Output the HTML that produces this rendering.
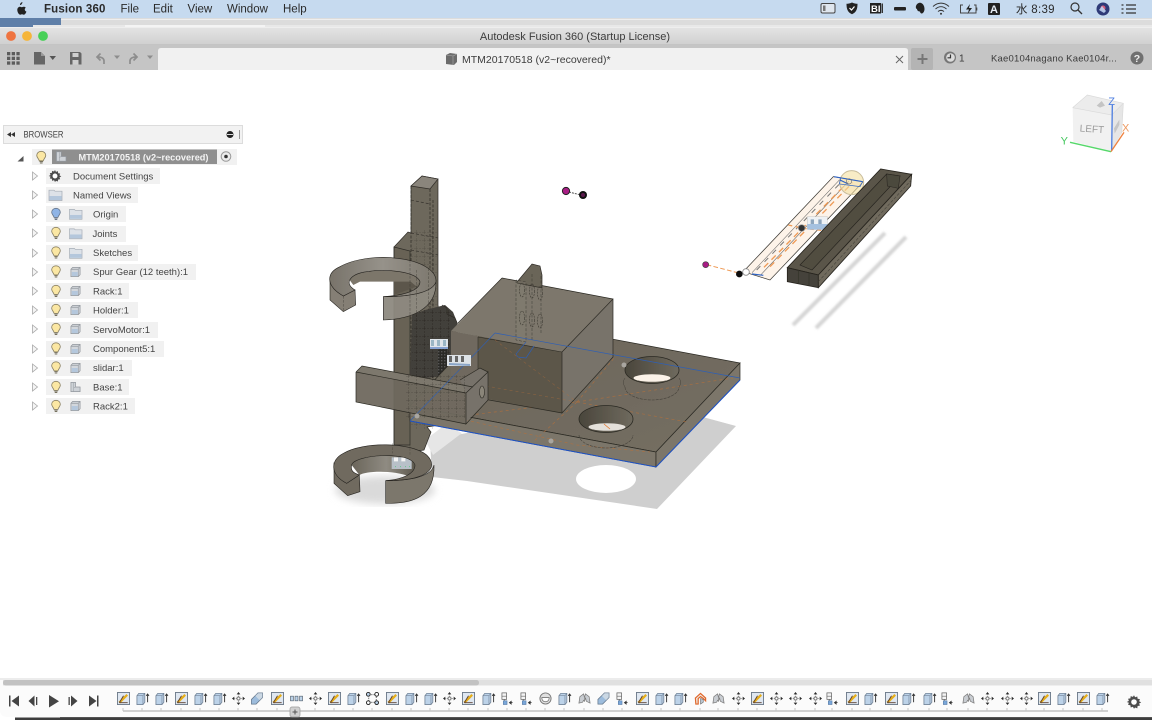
<!DOCTYPE html>
<html lang="en"><head><meta charset="utf-8"><title>Autodesk Fusion 360</title>
<style>
html,body{margin:0;padding:0;width:1152px;height:720px;overflow:hidden;background:#fff}
svg{display:block;filter:blur(.3px)}
text{font-family:"Liberation Sans","Noto Sans CJK JP",sans-serif;fill:#333}
.m{font-size:11.5px;fill:#2a2a2a}
.t{font-size:9.5px;fill:#444}
</style></head><body>
<svg width="1152" height="720" viewBox="0 0 1152 720" xmlns="http://www.w3.org/2000/svg">
<defs>
<linearGradient id="tb" x1="0" y1="0" x2="0" y2="1"><stop offset="0" stop-color="#e4e4e4"/><stop offset="1" stop-color="#cfcfcf"/></linearGradient>
<linearGradient id="holeG" x1="0" y1="0" x2="1" y2="0"><stop offset="0" stop-color="#4a463c"/><stop offset="1" stop-color="#6f6a5e"/></linearGradient>
<linearGradient id="ringG" x1="0" y1="0" x2="1" y2="0"><stop offset="0" stop-color="#78736a"/><stop offset=".5" stop-color="#96928a"/><stop offset="1" stop-color="#7c776d"/></linearGradient>
<linearGradient id="wallG" x1="0" y1="0" x2="1" y2="0"><stop offset="0" stop-color="#6a655a"/><stop offset=".55" stop-color="#8f8b82"/><stop offset="1" stop-color="#5e594e"/></linearGradient>
<linearGradient id="plateG" x1="0" y1="0" x2="1" y2="1"><stop offset="0" stop-color="#6a6458"/><stop offset="1" stop-color="#756f63"/></linearGradient>
<filter id="b1"><feGaussianBlur stdDeviation="1"/></filter>
<filter id="b3"><feGaussianBlur stdDeviation="4"/></filter>
<filter id="b05"><feGaussianBlur stdDeviation=".35"/></filter>
<pattern id="dense" width="3" height="3" patternUnits="userSpaceOnUse"><rect width="3" height="3" fill="#2b2925"/><path d="M0 0h1.4v1.4H0z" fill="#555"/></pattern>
<pattern id="grid" width="8" height="8" patternUnits="userSpaceOnUse"><path d="M0 0H8M0 0V8" stroke="#1d1b17" stroke-width=".6" stroke-dasharray="2 1"/></pattern>

<symbol id="bulb" viewBox="0 0 12 14" overflow="visible"><path d="M6 .8C3.2.8 1.3 2.8 1.3 5.1c0 2.2 2 3.2 2.6 5.6h4.2c.6-2.4 2.6-3.4 2.6-5.6C10.7 2.800 8.800.8 6 .8Z" fill="#fbe7a3" stroke="#8a8062" stroke-width=".9"/><path d="M4.200 11.500h3.600M4.600 13h2.800" stroke="#77725f" stroke-width="1.100"/></symbol>
<symbol id="bulbB" viewBox="0 0 12 14" overflow="visible"><path d="M6 .8C3.2.8 1.3 2.8 1.3 5.1c0 2.2 2 3.2 2.6 5.6h4.2c.6-2.4 2.600-3.400 2.600-5.600C10.700 2.800 8.800.8 6 .8Z" fill="#8fb4e6" stroke="#66768c" stroke-width=".9"/><path d="M4.200 11.500h3.600M4.600 13h2.800" stroke="#6c7686" stroke-width="1.100"/></symbol>
<symbol id="folder" viewBox="0 0 14 12" overflow="visible"><path d="M.5 2.200V1.200h5l1 1H13.500V11.500H.5Z" fill="#dde2e8" stroke="#a5acb5" stroke-width=".7"/><rect x="1" y="7" width="12" height="4" fill="#b4c7dc"/></symbol>
<symbol id="box" viewBox="0 0 12 12" overflow="visible"><path d="M1 3 3 1h8v8l-2 2H1Z" fill="#d3d7dc" stroke="#92979d" stroke-width=".8"/><path d="M1 3h8v8M9 3l2-2" fill="none" stroke="#92979d" stroke-width=".7"/><rect x="2" y="6" width="6.500" height="4.500" fill="#b4c7dc"/></symbol>
<symbol id="base" viewBox="0 0 12 12" overflow="visible"><path d="M1 11V1h5v5h5v5Z" fill="#ced2d7" stroke="#92979d" stroke-width=".8"/><path d="M4 11V1.500M6 6 4 7" fill="none" stroke="#9da2a8" stroke-width=".6"/></symbol>
<symbol id="tri" viewBox="0 0 8 10" overflow="visible"><path d="M1.500 1 6.500 5 1.500 9Z" fill="#f4f4f4" stroke="#a8a8a8" stroke-width=".8"/></symbol>

<symbol id="S" viewBox="0 0 14 14" overflow="visible"><rect x=".5" y=".5" width="13" height="13" fill="#dfe7f1" stroke="#6d7a8a" stroke-width="1"/><path d="M2.500 11.500 11 3" stroke="#e5ad19" stroke-width="2.400"/><path d="M2.500 11.500 7 4M2.500 11.500h9" stroke="#5d4030" stroke-width="1" fill="none"/></symbol>
<symbol id="E" viewBox="0 0 14 14" overflow="visible"><path d="M1 4 3 1.500h6.500V11L7.500 13.500H1Z" fill="#bcd2e8" stroke="#75869a" stroke-width=".9"/><path d="M1 4h6.500v9.500M7.500 4l2-2.500" fill="none" stroke="#75869a" stroke-width=".7"/><path d="M12.500 11V2.500M11 4.200l1.500-2 1.500 2" fill="none" stroke="#333" stroke-width="1"/></symbol>
<symbol id="M" viewBox="0 0 14 14" overflow="visible"><path d="M7 1.500V12.500M1.500 7H12.500" stroke="#777" stroke-width=".8" stroke-dasharray="1.500 1"/><path d="M7 0 5 2.500h4ZM7 14 5 11.500h4ZM0 7l2.500-2v4ZM14 7l-2.500-2v4Z" fill="#2c2c2c"/><rect x="5.500" y="5.500" width="3" height="3" fill="#fff" stroke="#555" stroke-width=".7"/></symbol>
<symbol id="C" viewBox="0 0 14 14" overflow="visible"><path d="M1 8 5 4h5v5L6 13H1Z" fill="#9dbcdc" stroke="#65788c" stroke-width=".8"/><path d="M5 4 8 1h5v5l-3 3" fill="#cbd8e4" stroke="#75869a" stroke-width=".8"/></symbol>
<symbol id="P" viewBox="0 0 14 14" overflow="visible"><rect x=".5" y="4.500" width="3.200" height="5" fill="#bcd2e8" stroke="#55626f" stroke-width=".7"/><rect x="5.400" y="4.500" width="3.200" height="5" fill="#bcd2e8" stroke="#55626f" stroke-width=".7"/><rect x="10.300" y="4.500" width="3.200" height="5" fill="#bcd2e8" stroke="#55626f" stroke-width=".7"/></symbol>
<symbol id="N" viewBox="0 0 14 14" overflow="visible"><path d="M3 3H11V11H3Z" fill="none" stroke="#444" stroke-width=".8" stroke-dasharray="1.500 1"/><circle cx="2.500" cy="2.500" r="2" fill="#bcd2e8" stroke="#222"/><circle cx="11.500" cy="2.500" r="2" fill="#fff" stroke="#222"/><circle cx="2.500" cy="11.500" r="2" fill="#fff" stroke="#222"/><circle cx="11.500" cy="11.500" r="2" fill="#bcd2e8" stroke="#222"/></symbol>
<symbol id="L" viewBox="0 0 14 14" overflow="visible"><path d="M1 1h5v7H1Z" fill="#f4f4f4" stroke="#666" stroke-width=".8"/><path d="M1 4.500h5M3.500 8v2" stroke="#666" stroke-width=".7"/><rect x="2.500" y="9.500" width="4" height="4" fill="#7aa7da" stroke="#5577a0" stroke-width=".6"/><path d="M9 11.500h3.500M9 11.500l2-1.500v3Z" stroke="#333" fill="#333" stroke-width=".8"/></symbol>
<symbol id="O" viewBox="0 0 14 14" overflow="visible"><circle cx="7" cy="7" r="6" fill="#e0e0e0" stroke="#777" stroke-width="1"/><path d="M3 6h8c0 3-2 4.500-4 4.500S3 9 3 6Z" fill="#fff" stroke="#666" stroke-width=".8"/></symbol>
<symbol id="H" viewBox="0 0 14 14" overflow="visible"><path d="M1 12 2 5l4-3 1 4 1-4 4 3 1 7-4-2-1-4-1 4-1-1-1 2Z" fill="#c9cdd2" stroke="#7d7d7d" stroke-width=".8"/><path d="M7 5v5" stroke="#888" stroke-width=".7"/></symbol>
<symbol id="R" viewBox="0 0 14 14" overflow="visible"><path d="M1.500 6.500 7 1.500l5.500 5v3L10 7 7 5 4.500 7v6H2Z" fill="#efe9e2" stroke="#e0662a" stroke-width="1.300"/><path d="M7 7v6l3-2V8Z" fill="#b8c4d0" stroke="#666" stroke-width=".6"/></symbol>
<symbol id="G" viewBox="0 0 20 20" overflow="visible"><path d="M10 1.500l1.400 2.600 2.700-1 .4 2.900 2.900.4-1 2.700 2.600 1.400-2.600 1.400 1 2.700-2.900.4-.4 2.900-2.700-1L10 18.500l-1.400-2.600-2.700 1-.4-2.900-2.900-.4 1-2.700L1 10l2.600-1.400-1-2.700 2.900-.4.4-2.900 2.700 1Z" fill="#4d4d4d"/><circle cx="10" cy="10" r="3.500" fill="#fff"/></symbol>
</defs>

<!-- Desktop strip and menu bar -->
<rect width="1152" height="720" fill="#fff"/>
<rect y="18" width="1152" height="10" fill="#dcdcdc"/>
<rect y="18" width="61" height="9" fill="#5f7fa8"/>
<rect x="33" y="25" width="1120" height="3" fill="#e8e8e8"/>
<rect x="61" y="19" width="1091" height="1" fill="#eee"/>
<rect x="125" y="25" width="140" height="2" fill="#f4f4f4"/>
<rect width="1152" height="18" fill="#c6daef"/>
<path d="M21.500 4.300c.8-.9 1-1.600.9-2.200-.7.100-1.500.6-1.900 1.200-.4.600-.5 1.200-.4 1.700.5.100 1 0 1.400-.7ZM24.700 9.700c0-1.200 1-1.800 1.100-1.900-.7-.9-1.600-1-2-1-.8-.1-1.600.5-2 .5s-1.100-.5-1.800-.5c-1 0-2.700.9-2.700 3.100 0 2.500 1.700 4.800 2.900 4.800.7 0 1-.4 1.800-.4s1.100.4 1.800.4c1.300 0 2.200-1.900 2.600-3.100-1-.4-1.700-1.300-1.700-2.400Z" fill="#222"/>
<text x="44" y="12.500" class="m" style="font-weight:700;letter-spacing:.15px">Fusion 360</text>
<text x="120.500" y="12.500" class="m" style="font-size:11.500px">File</text>
<text x="153" y="12.500" class="m">Edit</text>
<text x="187.500" y="12.500" class="m">View</text>
<text x="227" y="12.500" class="m">Window</text>
<text x="283" y="12.500" class="m">Help</text>

<!-- status icons -->
<g transform="translate(780 0)">
 <rect x="41" y="3.500" width="14" height="9.500" rx="1.500" fill="#dfe6ee" stroke="#444"/><rect x="43" y="5.500" width="2.500" height="5.500" fill="#777"/>
 <path d="M72 2.500c2 1 4 1.300 5.500 1.300 0 5-1 8.500-5.500 10.500-4.500-2-5.500-5.500-5.500-10.500 1.500 0 3.500-.3 5.500-1.300Z" fill="#222"/><path d="M69.500 8l2 2 3-3.500" stroke="#fff" stroke-width="1.200" fill="none"/>
 <rect x="90" y="3" width="11" height="10.500" fill="#222"/><text x="91" y="12" style="font-size:9.500px;font-weight:700;fill:#fff">BI</text><rect x="101.500" y="3.500" width="1.500" height="9.500" fill="#333"/>
 <rect x="114" y="7" width="12" height="3.500" rx="1" fill="#222"/>
 <path d="M136 6c1-3 4-4 6-2.500 1.500 1 2.500 3 2.500 5.500 0 2-1 4-2.500 4.500-1 .3-2-1-2-2-1.500 0-3-1-3-2.500-.8 0-1.500-1.500-1-3Z" fill="#222"/>
 <path d="M153 6.500c5-4.500 11-4.500 16 0M155.500 9c3.500-3 7.500-3 11 0M158 11.500c2-1.600 4-1.600 6 0" stroke="#333" stroke-width="1" fill="none"/><circle cx="161" cy="13.800" r="1" fill="#333"/>
 <path d="M183 5h-2.500v8H196V5h-2M196.800 7.500v3" fill="none" stroke="#444" stroke-width="1"/><path d="M190 4l-4 5.500h3l-1.500 4.500 4.500-6h-3Z" fill="#222"/>
 <rect x="208" y="3" width="12" height="12" rx="1" fill="#222"/><text x="210" y="13" style="font-size:11px;font-weight:700;fill:#e8eef6">A</text>
 <text x="236" y="13" style="font-size:11.500px;fill:#2a2a2a;letter-spacing:.3px">水 8:39</text>
 <circle cx="295" cy="7" r="4" fill="none" stroke="#333" stroke-width="1.200"/><path d="M298 10l4 4" stroke="#333" stroke-width="1.300"/>
 <circle cx="323" cy="9" r="6.500" fill="#2e3a78"/><circle cx="323" cy="8" r="2.500" fill="#d65a7a"/><path d="M319 10l3-4 4 5-2 2Z" fill="#bcd0ef" opacity=".9"/>
 <path d="M341.500 5h2M346 5h10M341.500 9h2M346 9h10M341.500 13h2M346 13h10" stroke="#333" stroke-width="1.300"/>
</g>

<!-- Title bar -->
<rect y="27" width="1152" height="18" fill="url(#tb)"/>
<rect y="27" width="1152" height="1" fill="#eee"/>
<rect y="44.500" width="1152" height="1" fill="#b9b9b9"/>
<circle cx="11" cy="36" r="4.900" fill="#ef7440"/><circle cx="27" cy="36" r="4.900" fill="#f5b53a"/><circle cx="43" cy="36" r="4.900" fill="#47d057"/>
<text x="575" y="40" text-anchor="middle" style="font-size:11px;fill:#3d3d3d">Autodesk Fusion 360 (Startup License)</text>

<!-- Toolbar -->
<rect y="45" width="1152" height="25" fill="#c5c5c5"/>
<path d="M158 70V51q0-3 3-3H905q3 0 3 3V70Z" fill="#f1f1f1"/>
<g fill="#5c5c5c"><rect x="7" y="52" width="3.300" height="3.300"/><rect x="11.700" y="52" width="3.300" height="3.300"/><rect x="16.400" y="52" width="3.300" height="3.300"/><rect x="7" y="56.700" width="3.300" height="3.300"/><rect x="11.700" y="56.700" width="3.300" height="3.300"/><rect x="16.400" y="56.700" width="3.300" height="3.300"/><rect x="7" y="61.400" width="3.300" height="3.300"/><rect x="11.700" y="61.400" width="3.300" height="3.300"/><rect x="16.400" y="61.400" width="3.300" height="3.300"/></g>
<path d="M34 52h7l4 4v8.500H34Z" fill="#666"/><path d="M41 52v4h4Z" fill="#999"/><path d="M49.500 56h6.500l-3.250 4Z" fill="#555"/>
<path d="M70 52h10l1.500 1.500v11h-11.500Z" fill="#666"/><rect x="72.500" y="53" width="6" height="4" fill="#cfcfcf"/><rect x="72.500" y="60" width="6" height="4.500" fill="#cfcfcf"/>
<path d="M104 64v-3c0-3-3-4-6-4M100.500 53.500 97 57l3.500 3.500" fill="none" stroke="#8d8d8d" stroke-width="1.700"/>
<path d="M114 55.500h6l-3 3.500Z" fill="#8d8d8d"/>
<path d="M130 64v-3c0-3 3-4 6-4M133.500 53.500 137 57l-3.500 3.500" fill="none" stroke="#8d8d8d" stroke-width="1.700"/>
<path d="M147 55.500h6l-3 3.500Z" fill="#8d8d8d"/>
<path d="M446 55 450 53l7 1v8l-3 3-8-1Z" fill="#6b6b6b"/><path d="M446 55l7 1v9M453 56l4-2" fill="none" stroke="#aaa" stroke-width=".6"/>
<text x="462" y="63" style="font-size:10.500px;fill:#3d3d3d">MTM20170518 (v2~recovered)*</text>
<path d="M896 56l7 7M903 56l-7 7" stroke="#666" stroke-width="1"/>
<rect x="911" y="48" width="22" height="22" rx="2" fill="#b4b4b4"/><path d="M922.500 54v10M917.500 59h10" stroke="#777" stroke-width="2"/>
<circle cx="950" cy="57.500" r="6" fill="#777"/><circle cx="950.500" cy="57.500" r="4.300" fill="#dcdcdc"/><path d="M950.500 54.500v3.300h-3" stroke="#333" stroke-width="1.200" fill="none"/>
<text x="959" y="61.500" style="font-size:10px;fill:#3a3a3a">1</text>
<text x="991" y="61.500" style="font-size:9.500px;fill:#3a3a3a;letter-spacing:.2px">Kae0104nagano Kae0104r...</text>
<circle cx="1137" cy="58" r="6.500" fill="#707070"/><text x="1137" y="62" text-anchor="middle" style="font-size:10.500px;font-weight:700;fill:#eee">?</text>

<!-- Shadows -->
<g>
 <path d="M430 440 432 477 467 481 657 509 736 426 640 400Z" fill="#cfcfcf"/>
 <ellipse cx="606" cy="479" rx="30" ry="14" fill="#fff" filter="url(#b05)"/>
 <path d="M425 440 433 455 462 433 445 425Z" fill="#e6e6e6"/>
 <ellipse cx="385" cy="490" rx="50" ry="14" fill="#dadada" filter="url(#b3)"/>
 <path d="M793 325 885 233" stroke="#d4d4d4" stroke-width="4" filter="url(#b1)"/>
 <path d="M816 328 906 237" stroke="#d4d4d4" stroke-width="4" filter="url(#b1)"/>
</g>

<!-- Tower -->
<g stroke="#2e2c27" stroke-width=".7" filter="url(#b05)">
 <path d="M394 247 408 232 411 233V186L422 176 438 179V305L440 320 440 425 427 427 431 432 424 450 410 452 394 445Z" fill="#6d675c"/>
 <path d="M411 186 430 189 438 179 422 176Z" fill="#8a857b"/>
 <path d="M394 247 410 251V445H394Z" fill="#55503f" fill-opacity=".22"/>
 <path d="M411 186V420M430 189V420M433 200V420" fill="none" stroke-dasharray="3 1.500" stroke-width=".7"/>
 <path d="M411 233 438 238M411 250 438 255M411 200 430 204" fill="none" stroke-dasharray="3 2" stroke-width=".6"/>
 <rect x="410" y="230" width="28" height="200" fill="url(#grid)" stroke="none" opacity=".45"/>
 <path d="M425 310 445 305 453 312 457 322 458 340 450 375 410 380 412 315Z" fill="#43403a" stroke="none"/>
 <path d="M442 305 447 308 447 314 455 318 458 325" fill="none"/>
 <rect x="412" y="310" width="38" height="72" fill="url(#grid)" stroke="none"/>
 <rect x="438" y="348" width="9" height="30" fill="url(#dense)" stroke="none"/>
</g>

<!-- Plate -->
<g filter="url(#b05)">
 <path d="M410 406 656 452 740 363 494 317Z" fill="url(#plateG)" stroke="#2b2923" stroke-width=".7"/>
 <path d="M410 406 656 452V467L410 421Z" fill="#7b766a" stroke="#2b2923" stroke-width=".7"/>
 <path d="M656 452 740 363V380L656 467Z" fill="#7b766a" stroke="#2b2923" stroke-width=".7"/>
 <!-- Plate sketch lines -->
 <g fill="none" stroke="#b8703a" stroke-width=".7" stroke-dasharray="3 3" opacity=".75">
  <path d="M577 402 687 422M577 402 733 378M577 402 533 442M577 402 615 357M470 415 577 402M430 412 577 445 650 452"/>
 </g>
 <!-- Holes -->
 <ellipse cx="652" cy="370" rx="27" ry="13.500" fill="url(#holeG)" stroke="#2b2923" stroke-width=".8"/>
 <ellipse cx="652" cy="378" rx="18.500" ry="3.800" fill="#fbf2e8"/>
 <path d="M625 387a27 13 0 0 0 54 0" fill="none" stroke="#45413a" stroke-width=".6" stroke-dasharray="3 1"/><path d="M625 378a27 13 0 0 0 0 9M679 378a27 13 0 0 1 0 9" fill="none" stroke="#45413a" stroke-width=".5"/>
 <ellipse cx="606" cy="419" rx="27" ry="13.500" fill="url(#holeG)" stroke="#2b2923" stroke-width=".8"/>
 <ellipse cx="607" cy="427" rx="18.500" ry="3.800" fill="#e4e0da"/>
 <path d="M579 435a27 13 0 0 0 54 0" fill="none" stroke="#45413a" stroke-width=".6" stroke-dasharray="3 1"/>
 <path d="M604 424l6 5" stroke="#e3752c" stroke-width=".8"/>
 <!-- Box -->
 <path d="M502 278 613 299 562 352 451 331Z" fill="#7d776c"/>
 <path d="M451 331 562 352V413L451 392Z" fill="#5b5649"/>
 <path d="M451 331 478 336V397L451 392Z" fill="#6f695e"/>
 <path d="M562 352 613 299V357L562 413Z" fill="#78736a"/>
 <path d="M562 352 613 299 502 278M562 352V413L613 357V299M562 413 478 398" fill="none" stroke="#2b2923" stroke-width=".7"/>
 <path d="M478 337V398" stroke="#3a372f" stroke-width=".7"/>
 <path d="M478 337 562 352" stroke="#2b2923" stroke-width=".6"/>
 <path d="M458 323 502 278" stroke="#2b2923" stroke-width=".7"/>
 <g fill="none" stroke="#b8703a" stroke-width=".6" stroke-dasharray="3 3" opacity=".5">
  <path d="M480 385 577 402M495 340 577 402"/>
 </g>
 <!-- Upper bracket on box -->
 <path d="M517 282 532 264 540 266 542 275V288L517 283Z" fill="#6b6559" stroke="#2f2c26" stroke-width=".7"/>
 <path d="M516 280V340L526 342V282ZM532 274V340M541 276V333" fill="#8d8a80" fill-opacity=".15" stroke="#3d3a33" stroke-width=".5" stroke-dasharray="3 1.500"/>
 <g fill="none" stroke="#3d3a33" stroke-width=".6" stroke-dasharray="2 1"><ellipse cx="522" cy="290" rx="2.500" ry="7"/><ellipse cx="532" cy="291" rx="2.500" ry="7"/><ellipse cx="540" cy="293" rx="2.500" ry="7"/><ellipse cx="522" cy="318" rx="2.500" ry="7"/><ellipse cx="532" cy="320" rx="2.500" ry="7"/><ellipse cx="540" cy="321" rx="2.500" ry="7"/></g>
 <!-- Holder bar -->
 <path d="M356 372 362 366 473 387 466 393Z" fill="#7d786d"/>
 <path d="M356 372 466 393V424L356 402Z" fill="#6f695e" fill-opacity=".95"/>
 <path d="M460 380 480 368 488 372 466 393Z" fill="#77726a"/>
 <path d="M466 393 488 372V400L466 422Z" fill="#77726a"/>
 <path d="M356 372 362 366 473 387M356 372 466 393M356 372V402L466 424M466 393 488 372V400L466 424V393M460 380 480 368 488 372" fill="none" stroke="#2b2923" stroke-width=".7"/>
 <ellipse cx="482" cy="392" rx="2.500" ry="6" fill="#8a8579" stroke="#2b2923" stroke-width=".6"/>
 <rect x="405" y="375" width="60" height="44" fill="url(#grid)" opacity=".6"/>
 <!-- Blue lines -->
 <g fill="none" stroke="#2e5fb5" stroke-width=".9">
  <path d="M495 333 740 378" stroke-width=".7"/>
  <path d="M410 421 656 467 740 380" stroke="#1e52c8" stroke-width="1"/>
  <path d="M410 421 495 333" stroke-width=".6"/>
  <path d="M518 357 526 358 534 346" stroke-width=".7"/>
  <path d="M518 357 516 354 526 342" stroke-width=".6"/>
 </g>
 <circle cx="624" cy="365" r="2.500" fill="#a9a6a0"/><circle cx="551" cy="441" r="2.500" fill="#a9a6a0"/><circle cx="417" cy="416" r="2.500" fill="#a9a6a0"/>
 <!-- Tags -->
 <rect x="430" y="339" width="18" height="10" fill="#dfe5ea"/><path d="M431 340h3v6h-3ZM437 340h3v6h-3ZM443 340h3v6h-3Z" fill="#8ab" opacity=".8"/><path d="M430 348h18" stroke="#2e5fb5"/>
 <rect x="447" y="355" width="24" height="11" fill="#dde2e7"/><path d="M449 356h3v6h-3ZM455 356h3v6h-3ZM461 356h3v6h-3Z" fill="#666"/><path d="M449 364 470 365" stroke="#8aa5c8" stroke-width="2"/>
</g>

<!-- Upper ring -->
<g transform="translate(320 170) scale(.33333)" filter="url(#b05)">
 <path d="M85 325C100 300 270 285 300 335 290 350 260 360 230 365L222 335H120L100 345Z" fill="#7b766b" stroke="none"/>
 <path d="M222 335H272L290 350 222 375Z" fill="#5b564b"/>
 <path d="M30 325V390L70 425 107 405 105 360 70 378Z" fill="#857f75" stroke="#25231f" stroke-width="1.800"/>
 <path d="M190 380V450C270 447 350 420 348 335 340 360 290 380 190 380Z" fill="#8d897f" fill-opacity=".95" stroke="#25231f" stroke-width="1.800"/>
 <path d="M70 378C20 350 15 310 60 290 110 262 190 258 230 265 300 272 350 300 348 335 340 362 290 380 190 380 240 377 300 365 300 335 290 305 200 295 140 305 90 312 70 340 105 360Z" fill="url(#ringG)" stroke="#25231f" stroke-width="1.800"/>
 <path d="M70 378V425M270 270V440M290 300V440M325 295V420" stroke="#2b2923" stroke-width="1.500" stroke-dasharray="8 4" fill="none" opacity=".6"/>
</g>

<!-- Lower ring -->
<g transform="translate(320 340) scale(.33333)" filter="url(#b05)">
 <path d="M95 375C100 345 270 330 285 375 285 395 278 402 272 410 220 390 140 392 118 405Z" fill="url(#wallG)"/>
 <rect x="215" y="352" width="60" height="35" fill="#b8c0c8"/><path d="M222 352h12v12h-12ZM244 352h12v12h-12Z" fill="#f4f4f4"/><path d="M225 380h2M240 380h2M255 380h2M268 380h2" stroke="#3fc770" stroke-width="3"/>
 <path d="M42 370V430L83 467 120 455 118 405 80 430Z" fill="#6f6a5f" stroke="#25231f" stroke-width="1.800"/>
 <path d="M197 422V490C280 492 345 470 342 375 335 410 270 422 197 422Z" fill="#7c776c" stroke="#25231f" stroke-width="1.800"/>
 <path d="M80 430C30 405 30 360 70 340 130 305 270 305 320 345 360 385 320 422 197 422 250 418 285 400 285 375 270 330 100 345 95 375 90 395 105 400 118 405Z" fill="#6f6a5f" stroke="#25231f" stroke-width="1.800"/>
 <path d="M218 310V340M270 312V345" stroke="#3a372f" stroke-width="1.500" stroke-dasharray="8 4" fill="none" opacity=".6"/>
</g>

<!-- Floating points -->
<path d="M569 192 581 195" stroke="#555" stroke-width="1" stroke-dasharray="2 1"/>
<circle cx="566" cy="191" r="3.600" fill="#a81d84" stroke="#222"/><circle cx="583" cy="195" r="4" fill="#111"/><circle cx="583" cy="195" r="2" fill="#7a1c66" opacity=".7"/>

<!-- Slider + rack, zoom origin 690,160 -->
<g transform="translate(690 160) scale(.33333)" filter="url(#b05)">
 <path d="M160 335 430 50 520 65 240 360Z" fill="#fdf3e9" stroke="#3d3b36" stroke-width="2.200"/>
 <path d="M186 338 450 58" stroke="#666" stroke-width="1.600" fill="none"/>
 <path d="M212 345 476 64" stroke="#555" stroke-width="1.600" fill="none"/>
 <g stroke="#ef9a55" stroke-width="4" stroke-dasharray="18 14" fill="none">
  <path d="M222 322 470 70M240 320 488 68"/>
  <path d="M200 330 455 65" stroke="#777" stroke-width="3" stroke-dasharray="16 18"/>
  <path d="M295 195 340 205 405 212" stroke-dasharray="12 10"/>
 </g>
 <circle cx="485" cy="68" r="36" fill="#f3e0a0" fill-opacity=".6" stroke="#c8bc9a" stroke-width="3"/>
 <path d="M432 50 518 65M450 60 475 72M186 342 220 346" stroke="#2f63c4" stroke-width="3.500" fill="none"/>
 <path d="M452 55 448 72 510 80 518 65" stroke="#2f63c4" stroke-width="2.200" fill="none"/>
 <circle cx="477" cy="64" r="8" fill="none" stroke="#777" stroke-width="2"/>
 <path d="M50 314 150 340" stroke="#ef9a55" stroke-width="3" stroke-dasharray="14 7"/>
 <circle cx="47" cy="314" r="9" fill="#a81d84" stroke="#444" stroke-width="2"/>
 <circle cx="168" cy="336" r="10" fill="#fff" stroke="#888" stroke-width="2.500"/>
 <circle cx="148" cy="342" r="10" fill="#111"/>
 <circle cx="335" cy="204" r="10" fill="#333" stroke="#999" stroke-width="2"/>
 <rect x="352" y="170" width="60" height="37" fill="#eef1f4" stroke="#c5c5c5" stroke-width="1.500"/>
 <rect x="352" y="192" width="60" height="17" fill="#a5c1e0"/>
 <path d="M362 178h10v14h-10ZM385 178h10v14h-10Z" fill="#8fa6bd"/>
 <path d="M292 323 572 27 665 43 385 345Z" fill="#5a5548" stroke="#26241f" stroke-width="2.500"/>
 <path d="M330 315 590 42 630 48 366 330Z" fill="#514d41" stroke="#26241f" stroke-width="2"/>
 <path d="M590 42 630 48 625 85 592 78Z" fill="#4c483d" stroke="#26241f" stroke-width="1.600"/>
 <path d="M292 323 385 345V383L292 365Z" fill="#45423a" stroke="#26241f" stroke-width="2.500"/>
 <path d="M325 330V372M357 338V378" stroke="#33312a" stroke-width="2"/>
 <path d="M385 345 665 43 662 78 385 383Z" fill="#6f6a5d" stroke="#26241f" stroke-width="2.500"/>
 <path d="M385 365 664 60" stroke="#45423a" stroke-width="1.800" stroke-dasharray="9 5"/>
</g>

<!-- View cube -->
<g transform="translate(1050 85) scale(.33333)" filter="url(#b05)">
 <path d="M68 68 112 30 220 55 185 90Z" fill="#ececec"/>
 <path d="M68 68 185 90 183 200 70 170Z" fill="#f1f1f1"/>
 <path d="M185 90 220 55 215 145 183 200Z" fill="#e6e6e6"/>
 <path d="M68 68 112 30 220 55 185 90 68 68M220 55 215 145" fill="none" stroke="#dadada" stroke-width="2"/>
 <text x="126" y="142" text-anchor="middle" transform="rotate(4 126 130)" style="font-size:30px;fill:#9b9b9b">LEFT</text>
 <path d="M140 62 155 48 165 62 150 68Z" fill="#c4c4c4"/>
 <path d="M192 130 208 104 208 120 194 146Z" fill="#c6c6c6"/>
 <path d="M187 60 185 198" stroke="#4f7fe0" stroke-width="4"/>
 <path d="M60 172 183 200" stroke="#55d86a" stroke-width="4"/>
 <path d="M183 200 222 142" stroke="#ee8240" stroke-width="4"/>
 <text x="185" y="60" text-anchor="middle" style="font-size:33px;fill:#4f7fe0">Z</text>
 <text x="43" y="178" text-anchor="middle" style="font-size:33px;fill:#43c75d">Y</text>
 <text x="227" y="140" text-anchor="middle" style="font-size:33px;fill:#ee9a60">X</text>
</g>

<!-- Browser panel -->
<rect x="3.500" y="125.500" width="239" height="18" fill="#f2f2f2" stroke="#dcdcdc"/>
<path d="M7 134.500l4-2.500v5ZM11 134.500l4-2.500v5Z" fill="#333"/>
<text x="23.500" y="137.500" textLength="40" lengthAdjust="spacingAndGlyphs" style="font-size:8.800px;fill:#444">BROWSER</text>
<circle cx="230" cy="134.500" r="3.500" fill="#222"/><rect x="227" y="134" width="6" height="1" fill="#ddd"/>
<path d="M239.500 130v9" stroke="#999"/>
<path d="M17.500 161.500h6v-5.500Z" fill="#555"/>
<rect x="32" y="149" width="205" height="16" fill="#f1f1f1"/>
<use href="#bulb" x="35.500" y="150.500" width="11.500" height="13.500"/>
<rect x="52" y="149.500" width="165" height="14.500" fill="#8f8f8f"/>
<use href="#base" x="55.500" y="150.500" width="11.500" height="12"/>
<text x="78.500" y="160.500" style="font-size:9.200px;font-weight:700;fill:#f4f4f4">MTM20170518 (v2~recovered)</text>
<circle cx="226" cy="156.500" r="4.800" fill="#ececec" stroke="#999"/><circle cx="226" cy="156.500" r="1.800" fill="#333"/>

<g fill="#f1f1f1">
<rect x="46" y="168" width="114" height="16"/><rect x="46" y="187" width="92" height="16"/><rect x="46" y="206" width="80" height="16"/><rect x="46" y="226" width="80" height="16"/><rect x="46" y="245" width="92" height="16"/><rect x="46" y="264" width="150" height="16"/><rect x="46" y="283" width="83" height="16"/><rect x="46" y="302" width="92" height="16"/><rect x="46" y="322" width="112" height="16"/><rect x="46" y="341" width="118" height="16"/><rect x="46" y="360" width="86" height="16"/><rect x="46" y="379" width="83" height="16"/><rect x="46" y="398" width="89" height="16"/>
</g>
<use href="#tri" x="31" y="171" width="8" height="10"/><use href="#tri" x="31" y="190" width="8" height="10"/><use href="#tri" x="31" y="209" width="8" height="10"/><use href="#tri" x="31" y="228" width="8" height="10"/><use href="#tri" x="31" y="248" width="8" height="10"/><use href="#tri" x="31" y="267" width="8" height="10"/><use href="#tri" x="31" y="286" width="8" height="10"/><use href="#tri" x="31" y="305" width="8" height="10"/><use href="#tri" x="31" y="324" width="8" height="10"/><use href="#tri" x="31" y="344" width="8" height="10"/><use href="#tri" x="31" y="363" width="8" height="10"/><use href="#tri" x="31" y="382" width="8" height="10"/><use href="#tri" x="31" y="401" width="8" height="10"/>

<use href="#G" x="48" y="169" width="14" height="14"/>
<use href="#folder" x="48.500" y="189" width="14" height="12"/>
<use href="#bulbB" x="50.500" y="207.500" width="11" height="13"/><use href="#folder" x="69" y="208" width="13.500" height="12"/>
<use href="#bulb" x="50.500" y="226.500" width="11" height="13"/><use href="#folder" x="69" y="227.500" width="13.500" height="12"/>
<use href="#bulb" x="50.500" y="246" width="11" height="13"/><use href="#folder" x="69" y="247" width="13.500" height="12"/>
<use href="#bulb" x="50.500" y="265" width="11" height="13"/><use href="#box" x="70" y="266" width="11" height="12"/>
<use href="#bulb" x="50.500" y="284.500" width="11" height="13"/><use href="#box" x="70" y="285" width="11" height="12"/>
<use href="#bulb" x="50.500" y="303.500" width="11" height="13"/><use href="#box" x="70" y="304" width="11" height="12"/>
<use href="#bulb" x="50.500" y="322.500" width="11" height="13"/><use href="#box" x="70" y="323" width="11" height="12"/>
<use href="#bulb" x="50.500" y="342" width="11" height="13"/><use href="#box" x="70" y="343" width="11" height="12"/>
<use href="#bulb" x="50.500" y="361" width="11" height="13"/><use href="#box" x="70" y="362" width="11" height="12"/>
<use href="#bulb" x="50.500" y="380.500" width="11" height="13"/><use href="#base" x="70" y="381" width="11" height="12"/>
<use href="#bulb" x="50.500" y="399.500" width="11" height="13"/><use href="#box" x="70" y="400" width="11" height="12"/>

<text x="73" y="179.500" class="t">Document Settings</text>
<text x="73" y="198.500" class="t">Named Views</text>
<text x="93" y="217.500" class="t">Origin</text>
<text x="92.500" y="237" class="t">Joints</text>
<text x="93" y="256" class="t">Sketches</text>
<text x="93" y="275" class="t">Spur Gear (12 teeth):1</text>
<text x="93" y="294.500" class="t">Rack:1</text>
<text x="93" y="313.500" class="t">Holder:1</text>
<text x="93" y="333" class="t">ServoMotor:1</text>
<text x="93" y="352" class="t">Component5:1</text>
<text x="93" y="371" class="t">slidar:1</text>
<text x="93" y="390.500" class="t">Base:1</text>
<text x="93" y="409.500" class="t">Rack2:1</text>

<!-- Timeline -->
<rect y="714" x="60" width="1092" height="6" fill="#6a6a6a"/>
<rect y="717.500" x="15" width="1137" height="2.500" fill="#3d3d3d"/>
<path d="M0 678H1152V717H8Q0 717 0 710Z" fill="#fbfbfb"/>
<rect y="678.500" width="1152" height="1" fill="#dcdcdc"/>
<rect x="3" y="680" width="1149" height="5.500" fill="#e0e0e0"/>
<rect x="3" y="680" width="476" height="5.500" rx="2.500" fill="#c2c2c2"/>
<rect x="123" y="710" width="985" height="2" fill="#d0d0d0"/>
<path d="M123 708V711M142 708V711M161 708V711M181 708V711M200 708V711M219 708V711M238 708V711M257 708V711M277 708V711M315 708V711M334 708V711M353 708V711M372 708V711M392 708V711M411 708V711M430 708V711M449 708V711M468 708V711M488 708V711M507 708V711M526 708V711M545 708V711M564 708V711M584 708V711M603 708V711M622 708V711M642 708V711M661 708V711M680 708V711M700 708V711M718 708V711M738 708V711M757 708V711M776 708V711M795 708V711M815 708V711M832 708V711M852 708V711M870 708V711M891 708V711M908 708V711M929 708V711M947 708V711M968 708V711M987 708V711M1007 708V711M1026 708V711M1044 708V711M1063 708V711M1083 708V711M1102 708V711" stroke="#c4c4c4"/>
<rect x="290" y="707" width="10" height="10" rx="2" fill="#d0d0d0" stroke="#999" stroke-width=".7"/><path d="M295 709.500v5M292.500 712h5" stroke="#555"/>

<g fill="#444">
 <path d="M9 695.500h1.500v11H9Z"/><path d="M19 695.500v11l-7.500-5.500Z"/>
 <path d="M28.500 701l6-5.500v11Z"/><rect x="36" y="697" width="1.300" height="8"/>
 <path d="M49 695v12.500l10-6.250Z"/>
 <rect x="68.500" y="697" width="1.300" height="8"/><path d="M71 695.500v11l6.500-5.500Z"/>
 <path d="M89 695.500v11l7.500-5.500Z"/><rect x="97" y="695.500" width="1.500" height="11"/>
</g>

<g>
<use href="#S" x="117" y="692" width="13" height="13"/><use href="#E" x="136" y="692" width="13" height="13"/><use href="#E" x="155" y="692" width="13" height="13"/><use href="#S" x="175" y="692" width="13" height="13"/><use href="#E" x="194" y="692" width="13" height="13"/><use href="#E" x="213" y="692" width="13" height="13"/><use href="#M" x="232" y="692" width="13" height="13"/><use href="#C" x="250" y="692" width="14" height="13"/><use href="#S" x="271" y="692" width="13" height="13"/><use href="#P" x="290" y="692" width="13" height="13"/><use href="#M" x="309" y="692" width="13" height="13"/><use href="#S" x="328" y="692" width="13" height="13"/><use href="#E" x="347" y="692" width="13" height="13"/><use href="#N" x="366" y="692" width="13" height="13"/><use href="#S" x="386" y="692" width="13" height="13"/>
<use href="#E" x="405" y="692" width="13" height="13"/><use href="#E" x="424" y="692" width="13" height="13"/><use href="#M" x="443" y="692" width="13" height="13"/><use href="#S" x="462" y="692" width="13" height="13"/><use href="#E" x="482" y="692" width="13" height="13"/><use href="#L" x="501" y="692" width="13" height="13"/><use href="#L" x="520" y="692" width="13" height="13"/><use href="#O" x="539" y="692" width="13" height="13"/><use href="#E" x="558" y="692" width="13" height="13"/><use href="#H" x="578" y="692" width="13" height="13"/><use href="#C" x="597" y="692" width="13" height="13"/><use href="#L" x="616" y="692" width="13" height="13"/><use href="#S" x="636" y="692" width="13" height="13"/><use href="#E" x="655" y="692" width="13" height="13"/><use href="#E" x="674" y="692" width="13" height="13"/><use href="#R" x="694" y="692" width="13" height="13"/><use href="#H" x="712" y="692" width="13" height="13"/><use href="#M" x="732" y="692" width="13" height="13"/><use href="#S" x="751" y="692" width="13" height="13"/><use href="#M" x="770" y="692" width="13" height="13"/><use href="#M" x="789" y="692" width="13" height="13"/>
<use href="#M" x="809" y="692" width="13" height="13"/><use href="#L" x="826" y="692" width="13" height="13"/><use href="#S" x="846" y="692" width="13" height="13"/><use href="#E" x="864" y="692" width="13" height="13"/><use href="#S" x="885" y="692" width="13" height="13"/><use href="#E" x="902" y="692" width="13" height="13"/><use href="#E" x="923" y="692" width="13" height="13"/><use href="#L" x="941" y="692" width="13" height="13"/><use href="#H" x="962" y="692" width="13" height="13"/><use href="#M" x="981" y="692" width="13" height="13"/><use href="#M" x="1001" y="692" width="13" height="13"/><use href="#M" x="1020" y="692" width="13" height="13"/><use href="#S" x="1038" y="692" width="13" height="13"/><use href="#E" x="1057" y="692" width="13" height="13"/><use href="#S" x="1077" y="692" width="13" height="13"/><use href="#E" x="1096" y="692" width="13" height="13"/>
</g>
<use href="#G" x="1126" y="694" width="16" height="16"/>
</svg>
</body></html>
